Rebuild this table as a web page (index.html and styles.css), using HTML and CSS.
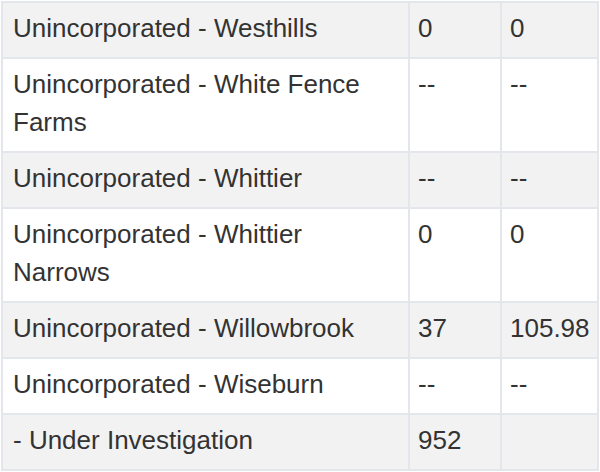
FILE: index.html
```html
<!DOCTYPE html>
<html>
<head>
<meta charset="utf-8">
<link rel="stylesheet" href="styles.css">
</head>
<body>
<table class="data">
  <colgroup>
    <col class="c-name">
    <col class="c-num">
    <col class="c-rate">
  </colgroup>
  <tbody>
    <tr class="odd"><td>Unincorporated - Westhills</td><td>0</td><td>0</td></tr>
    <tr><td>Unincorporated - White Fence Farms</td><td>--</td><td>--</td></tr>
    <tr class="odd"><td>Unincorporated - Whittier</td><td>--</td><td>--</td></tr>
    <tr><td>Unincorporated - Whittier Narrows</td><td>0</td><td>0</td></tr>
    <tr class="odd"><td>Unincorporated - Willowbrook</td><td>37</td><td>105.98</td></tr>
    <tr><td>Unincorporated - Wiseburn</td><td>--</td><td>--</td></tr>
    <tr class="odd"><td>- Under Investigation</td><td>952</td><td></td></tr>
  </tbody>
</table>
</body>
</html>
```
FILE: styles.css
```css
html, body {
  margin: 0;
  padding: 0;
  background: #ffffff;
}
body {
  padding: 1px 0 0 1px;
  font-family: "Liberation Sans", Arial, Helvetica, sans-serif;
  color: #333333;
}
.data {
  border-collapse: collapse;
  table-layout: fixed;
  width: 596px;
  font-size: 26px;
  line-height: 38px;
}
.c-name { width: 407px; }
.c-num { width: 92px; }
.c-rate { width: 97px; }
.data td {
  border: 2px solid #e3e6ea;
  padding: 6px 8px 10px 10px;
  vertical-align: top;
  text-align: left;
}
.data td + td {
  padding-left: 8px;
}
.data tr.odd td {
  background: #f2f2f2;
}
```
